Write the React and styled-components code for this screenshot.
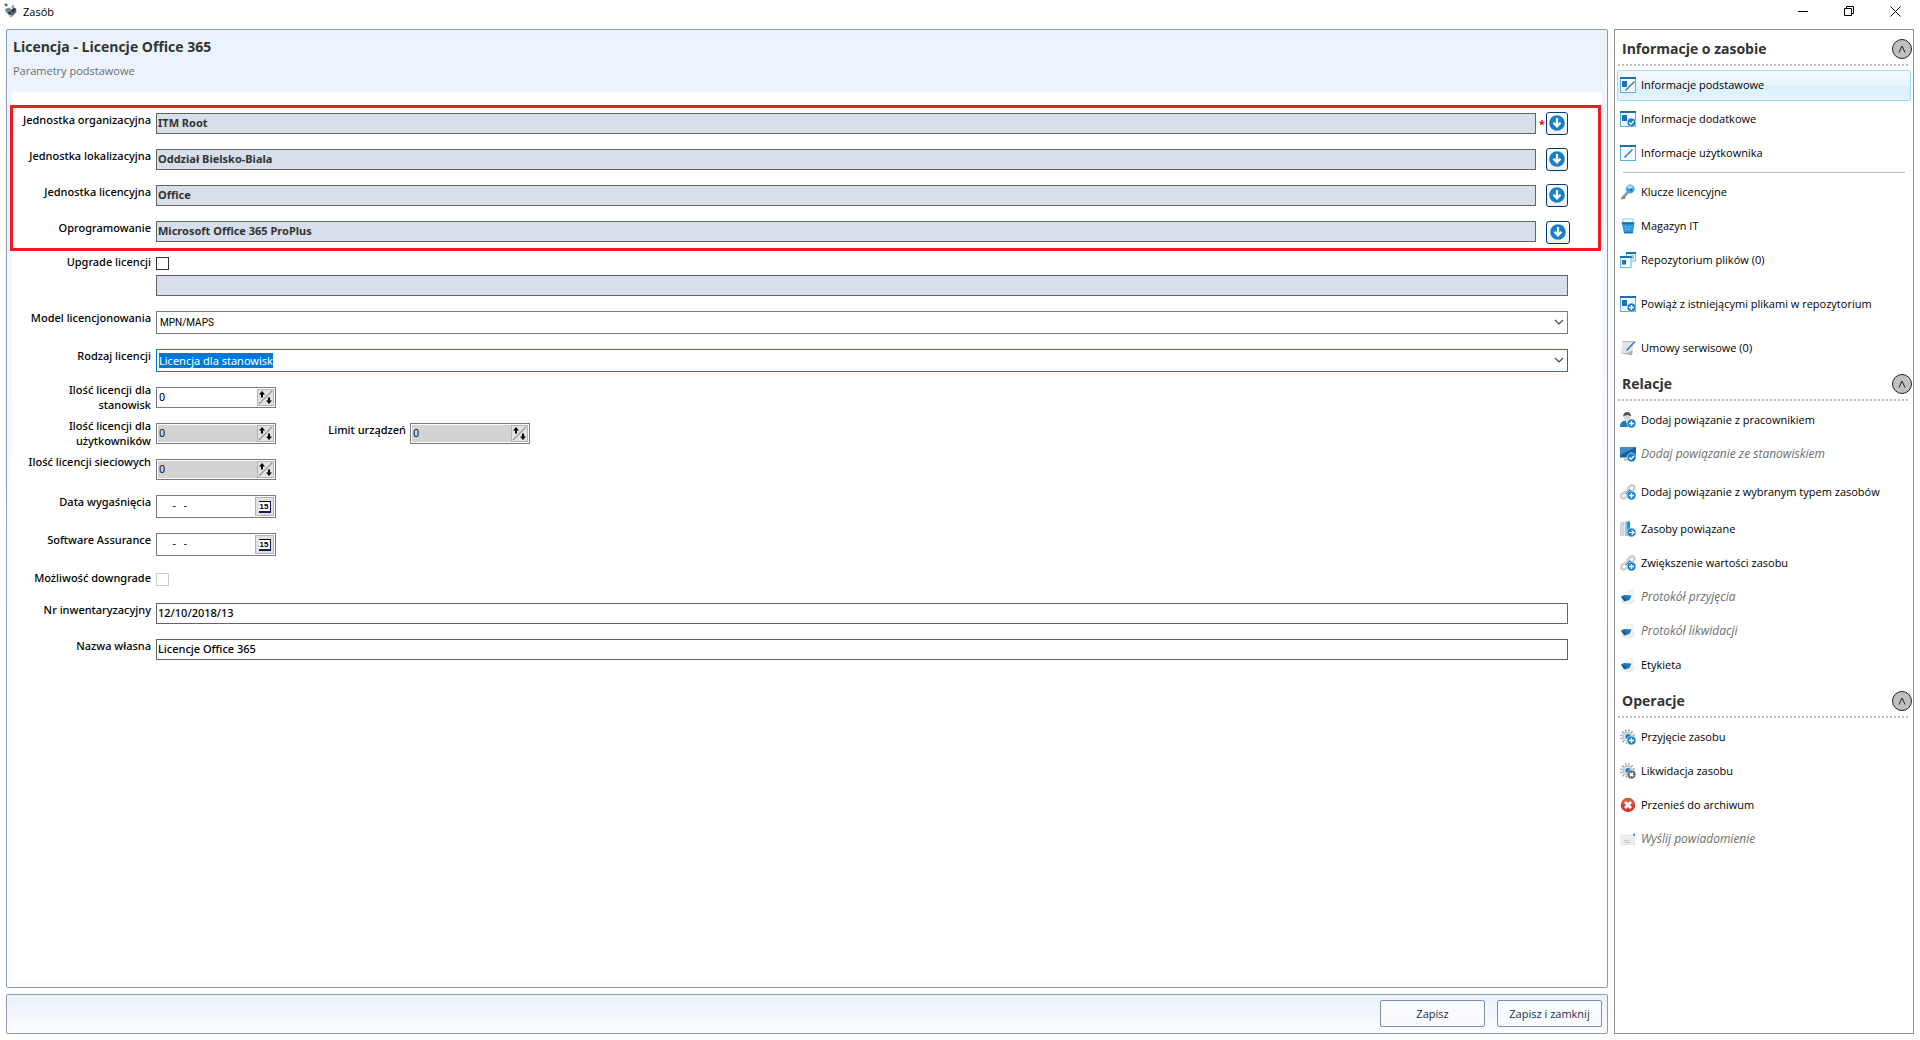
import React, { useId } from 'react';
import styled, { createGlobalStyle, css } from 'styled-components';

const GlobalStyle = createGlobalStyle`
  * {
    box-sizing: border-box;
  }

  body {
    margin: 0;
    background: #fff;
    color: #000;
    font-family: 'Open Sans', 'Noto Sans', sans-serif;
    font-size: 11px;
    line-height: 15px;
  }

  button, input, select {
    font: inherit;
    color: inherit;
  }
`;

const Window = styled.div`
  display: flex;
  flex-direction: column;
  min-height: 100vh;
`;

const TitleBar = styled.header`
  display: flex;
  align-items: center;
  height: 29px;
  padding: 0 14px 7px 3px;
`;

const WindowTitle = styled.span`
  flex: 1;
  margin-left: 4px;
`;

const WindowButtons = styled.div`
  display: flex;
  gap: 25px;
`;

const PlainButton = styled.button`
  display: flex;
  padding: 0 5px;
  border: 0;
  background: none;
`;

const Content = styled.div`
  flex: 1;
  display: grid;
  grid-template-columns: minmax(0, 1fr) 300px;
  gap: 6px;
  padding: 0 6px 6px;
`;

const MainColumn = styled.main`
  display: flex;
  flex-direction: column;
  gap: 6px;
`;

const Panel = styled.section`
  flex: 1;
  padding: 0 5px 6px;
  border: 1px solid #8d9bae;
  border-radius: 2px;
  background: linear-gradient(#eaf3fd 0, #eef3fd 62px, #f3f7fe 300px, #fcfdff 600px);
`;

const PanelHeader = styled.div`
  height: 62px;
  padding: 7px 1px 0;
`;

const PanelTitle = styled.h1`
  margin: 0;
  font-size: 14px;
  line-height: 20px;
  color: #333;
`;

const PanelSubtitle = styled.p`
  margin: 6px 0 0;
  color: #6d6d6d;
`;

const Form = styled.form`
  padding: 13px 1px 20px 0;
  background: #fff;
  min-height: calc(100% - 62px);
  font-family: 'Noto Sans', 'Open Sans', sans-serif;
`;

const RequiredGroup = styled.div`
  margin: 0 0 4px -2px;
  padding: 5px 0 6px;
  border: 3px solid #ed1c24;

  > div:last-child {
    margin-bottom: 0;
  }
`;

const Row = styled.div`
  display: grid;
  grid-template-columns: 139px minmax(0, 1fr) 28px;
  column-gap: 5px;
  align-items: start;
  height: ${(p) => p.$height || 21}px;
  margin-bottom: ${(p) => (p.$tight ? 3 : 15)}px;
`;

const LookupRow = styled(Row)`
  grid-template-columns: 138px minmax(0, 1fr) 0 52px;
`;

const Label = styled.label`
  margin-top: ${(p) => (p.$raised ? -5 : -1)}px;
  font-weight: 500;
  text-align: right;
  white-space: nowrap;
`;

const TextField = styled.input`
  width: 100%;
  height: 21px;
  padding: 0 1px 2px;
  border: 1px solid #646464;
  background: #fff;
  font-weight: 500;
  outline: 0;

  &:read-only {
    background: #d7dfea;
    color: #333;
    font-weight: 700;
  }
`;

const Star = styled.span`
  color: #f00;
  font-weight: 700;
  margin: 3px 0 0 -2px;
`;

const LookupButton = styled.button`
  display: flex;
  align-items: center;
  justify-content: center;
  width: ${(p) => (p.$wide ? 24 : 22)}px;
  height: 23px;
  margin-top: ${(p) => (p.$wide ? 0 : -1)}px;
  padding: 0 0 1px;
  border: 1px solid #003c74;
  border-radius: 3px;
  background: linear-gradient(#fff, #f0efea);
`;

const Tick = styled.input`
  appearance: none;
  width: 13px;
  height: 13px;
  margin: 2px 0 0;
  border: 1px solid #333;
  background: #fff;

  &:disabled {
    border-color: #ccc;
  }
`;

const Combo = styled.div`
  position: relative;
  display: flex;
  align-items: center;
  height: 23px;
  padding: 0 2px 1px;
  border: 1px solid ${(p) => (p.$active ? '#0078d7' : '#7a7a7a')};

  svg {
    position: absolute;
    right: 3px;
    pointer-events: none;
  }
`;

const Select = styled.select`
  appearance: none;
  width: 100%;
  height: 15px;
  padding: 0 1px;
  border: 0;
  background: none;
  font-family: Roboto, sans-serif;
  font-size: 10px;
  outline: 0;

  ${(p) =>
    p.$active &&
    css`
      field-sizing: content;
      width: auto;
      padding: 0;
      background: #0078d7;
      color: #fff;
      font-family: 'Noto Sans', sans-serif;
      font-size: 11px;
    `}
`;

const SmallFields = styled.div`
  display: flex;
  align-items: flex-start;
  gap: 4px;

  label {
    width: 126px;
  }
`;

const SmallBox = styled.div`
  display: flex;
  align-items: center;
  width: 120px;
  height: ${(p) => p.$height || 21}px;
  padding: 1px;
  border: 1px solid #7a7a7a;
  background: #fff;

  input {
    flex: 1;
    min-width: 0;
    height: 100%;
    padding: 0 1px 1px;
    border: 0;
    background: #fff;
    font-family: Roboto, sans-serif;
    outline: 0;
  }

  input:disabled {
    background: #d3d3d3;
    color: #222;
  }
`;

const StepButton = styled.button`
  display: flex;
  align-items: center;
  justify-content: center;
  width: ${(p) => (p.$calendar ? 19 : 17)}px;
  height: 100%;
  padding: 0;
  border: 1px solid #b4b4b4;
  background: #e1e1e1;
`;

const CalendarFace = styled.span`
  width: 12px;
  height: 12px;
  border: solid;
  border-width: 1px 1px 2px 0;
  border-color: #000 #1b1b5e #1b1b5e;
  background: #fff;
  color: #000;
  font: 700 8px/9px 'Liberation Sans', Arial, sans-serif;
  text-align: center;
`;

const Footer = styled.footer`
  display: flex;
  justify-content: flex-end;
  align-items: center;
  gap: 12px;
  height: 40px;
  padding: 0 5px 1px;
  border: 1px solid #8d9bae;
  border-radius: 2px;
  background: linear-gradient(#eaf1fc, #fcfdff);
`;

const ActionButton = styled.button`
  width: 105px;
  height: 27px;
  padding: 0 0 1px;
  border: 1px solid #7f90a8;
  border-radius: 2px;
  background: linear-gradient(#fbfcff, #f7f9fd);
  color: #1e2f4d;
`;

const Sidebar = styled.aside`
  border: 1px solid #919191;
  background: #fff;
`;

const SectionHeader = styled.div`
  display: flex;
  align-items: center;
  justify-content: space-between;
  height: 38px;
  padding: 0 1px 0 7px;
  background: repeating-linear-gradient(90deg, #bdbdbd 0 2px, transparent 2px 4px) 3px 34px / 290px 2px no-repeat;
`;

const SectionTitle = styled.h2`
  margin: 0;
  font-size: 14px;
  line-height: 20px;
  color: #333;
`;

const CollapseButton = styled.button`
  display: flex;
  align-items: center;
  justify-content: center;
  width: 20px;
  height: 20px;
  padding: 0;
  border: 1px solid #222;
  border-radius: 50%;
  background: #c0c0c0;
`;

const NavItem = styled.div`
  display: flex;
  align-items: center;
  height: ${(p) => p.$height || 34}px;
  padding: 1px 2px 0;
`;

const NavLink = styled.a`
  flex: 1;
  display: flex;
  align-items: center;
  gap: 5px;
  height: 31px;
  padding: 0 2px 1px;
  border: 1px solid transparent;
  border-radius: 2px;
  color: #000;
  line-height: 14px;
  text-decoration: none;
  white-space: nowrap;

  ${(p) =>
    p.$active &&
    css`
      border-color: #99defd;
      background: linear-gradient(#f3fafe, #e9f6fd 50%, #d9f0fc 51%, #e4f4fc);
    `}

  ${(p) =>
    p.$muted &&
    css`
      color: #6d6d6d;
      font-size: 12px;
      font-style: italic;
    `}
`;

const Divider = styled.hr`
  margin: 2px 8px;
  border: 0;
  border-top: 1px solid #bbb;
`;

const Svg = ({ size = 16, children }) => (
  <svg width={size} height={size} viewBox={`0 0 ${size} ${size}`} aria-hidden="true">
    {children}
  </svg>
);

const Frame = ({ children }) => (
  <>
    <rect x="0.5" y="0.5" width="15" height="15" fill="#f4fafe" stroke="#5fb0e0" />
    <path d="M0 1h16" stroke="#1f6fae" strokeWidth="2" />
    {children}
  </>
);

const Badge = ({ color = '#1b7fc4', mark = 'plus' }) => (
  <>
    <circle cx="11.5" cy="11.5" r="4.5" fill={color} stroke="#fff" strokeWidth="0.6" />
    {mark === 'plus' && <path d="M11.5 9v5M9 11.5h5" stroke="#fff" strokeWidth="1.4" />}
    {mark === 'check' && <path d="M9.3 11.5l1.7 1.7 2.9-3.3" stroke="#fff" strokeWidth="1.4" fill="none" />}
    {mark === 'cross' && <path d="M9.9 9.9l3.2 3.2M13.1 9.9l-3.2 3.2" stroke="#fff" strokeWidth="1.5" />}
    {mark === 'arrow' && <path d="M9 11.5h4.6M11.6 9.2l2.3 2.3-2.3 2.3" stroke="#fff" strokeWidth="1.2" fill="none" />}
  </>
);

const Chain = () => (
  <g fill="none" stroke="#c9cdd0" strokeWidth="2.4">
    <rect x="8.5" y="1" width="5" height="7.6" rx="2.5" transform="rotate(42 11 4.8)" />
    <rect x="2.2" y="7.4" width="5" height="7.6" rx="2.5" transform="rotate(56 4.7 11.2)" />
  </g>
);

const Gear = () => (
  <>
    <circle cx="7.5" cy="7.5" r="6.2" fill="none" stroke="#a7adb1" strokeWidth="2.4" strokeDasharray="1.6 1.64" />
    <circle cx="7.5" cy="7.5" r="4.2" fill="#e4e7e9" stroke="#c2c6c9" strokeWidth="1.4" />
    <circle cx="8" cy="7.5" r="2.6" fill="#1b7fc4" />
  </>
);

const icons = {
  basic: (
    <Frame>
      <rect x="2" y="4" width="5" height="6" fill="#1b74b8" />
      <path d="M5.5 13.5l9-9" stroke="#2d6fa3" strokeWidth="1.3" />
    </Frame>
  ),
  extra: (
    <Frame>
      <rect x="2" y="4" width="5" height="6" fill="#1b74b8" />
      <Badge mark="check" />
    </Frame>
  ),
  user: (
    <Frame>
      <path d="M4.5 12.5l8-8" stroke="#2d6fa3" strokeWidth="1.3" />
    </Frame>
  ),
  key: (
    <>
      <path d="M1.5 15l7.5-8" stroke="#929aa0" strokeWidth="2.6" />
      <path d="M3.5 14.8l1.6-1.8" stroke="#6f777c" strokeWidth="1.6" />
      <circle cx="10.2" cy="5" r="4.4" fill="#3f9fe6" />
      <ellipse cx="10" cy="3" rx="2.8" ry="1.7" fill="#b7defa" />
      <circle cx="11" cy="6" r="1.2" fill="#1467ad" />
    </>
  ),
  store: (
    <>
      <path d="M3 5V1h10v4" fill="#eef8fd" stroke="#8fcdf0" />
      <path d="M1.5 4h13l-.5 4-1 7.5H4L2.5 8z" fill="#2a95da" />
      <path d="M2 5.5h12" stroke="#1170b4" strokeWidth="1.4" />
      <path d="M4.5 9h7M5 11.5h6" stroke="#7cc6f0" strokeDasharray="2 1" />
      <path d="M4.5 14.5h8" stroke="#1170b4" />
    </>
  ),
  files: (
    <>
      <rect x="6.5" y="0.5" width="9" height="8.5" fill="#eef7fd" stroke="#6cb8e6" />
      <path d="M6 1h10" stroke="#1f6fae" strokeWidth="2" />
      <rect x="11" y="3" width="3" height="4" fill="#8fc4e6" />
      <rect x="0.5" y="4.5" width="10.5" height="11" fill="#f5fbff" stroke="#6cb8e6" />
      <path d="M0 5h11.5" stroke="#1f6fae" strokeWidth="2" />
      <rect x="2" y="8" width="4" height="4.5" fill="#1b74b8" />
    </>
  ),
  linkFiles: (
    <Frame>
      <rect x="2" y="4" width="5" height="6" fill="#1b74b8" />
      <Badge />
    </Frame>
  ),
  contract: (
    <>
      <path d="M2.5 1.5h11L12 15 0.8 13.5z" fill="#e2e3e3" />
      <path d="M1 13.5l11 1.7.8-5L7 13z" fill="#aeb0b1" />
      <path d="M2.5 1.5h11" stroke="#b9bbbc" />
      <path d="M6.5 10.5L15 1.5" stroke="#2878b8" strokeWidth="1.4" />
    </>
  ),
  employee: (
    <>
      <circle cx="7" cy="4.6" r="3.2" fill="#d9d5d0" />
      <path d="M3.2 4.5C3 1.5 5 0 7 0s4.3 1.4 3.9 4.5C9.5 2.7 5.5 2.7 3.2 4.5z" fill="#555" />
      <path d="M0 15c0-4.5 2.5-6.5 7-6.5s5 1.5 6 3.5v3z" fill="#1f79ba" />
      <path d="M5.5 8.5L7 11l1.5-2.5z" fill="#fff" />
      <Badge />
    </>
  ),
  station: (
    <>
      <rect x="0" y="1" width="16" height="10.5" fill="#1c5f9e" />
      <path d="M0 1h16L0 9z" fill="#3d8bc8" />
      <path d="M4 13.5h7" stroke="#b0b6ba" strokeWidth="2" />
      <Badge mark="check" />
    </>
  ),
  chain: (
    <>
      <Chain />
      <path d="M5 10.5l5-5.5 5 5.5z" fill="#1b7fc4" />
      <Badge />
    </>
  ),
  related: (
    <>
      <path d="M0.5 2L4 1v13l-3.5 1z" fill="#d5dade" stroke="#b5bcc1" strokeWidth="0.6" />
      <path d="M5 1l5-0.8V14l-5 1z" fill="#2592d8" />
      <path d="M5 1l2 .5V15l-2-0.5z" fill="#8bcbf0" />
      <Badge mark="arrow" />
    </>
  ),
  printer: (
    <>
      <path d="M6 6l1.5-4.5H13l.5 8L10 12z" fill="#f7f7f7" stroke="#e6e6e6" strokeWidth="0.6" />
      <path d="M1 11.5l9 .5 4.500-3-.5 4-4 2.500-8.500-1.500z" fill="#e9eaeb" />
      <path d="M1 7.5l3-1.500 7.500.5-2 4.500-5 1.500z" fill="#1a78bd" />
      <path d="M1 7.5l5 2-.5 2.500-2-.5z" fill="#155a91" />
    </>
  ),
  gearPlus: (
    <>
      <Gear />
      <Badge />
    </>
  ),
  gearCross: (
    <>
      <Gear />
      <Badge color="#676c70" mark="cross" />
    </>
  ),
  archive: (
    <>
      <circle cx="8" cy="8" r="7.2" fill="#cf3e2c" />
      <path d="M1.8 7.5a6.2 6.2 0 0 1 12.4 0z" fill="#e0705f" opacity="0.6" />
      <path d="M5 5l6 6M11 5l-6 6" stroke="#fff" strokeWidth="2.8" />
    </>
  ),
  mail: (
    <>
      <path d="M0.5 4h13l1.5 9.5H1.5z" fill="#ededed" stroke="#dcdcdc" strokeWidth="0.6" />
      <path d="M4 9.5h5M5 11.5h5" stroke="#c6c6c6" />
      <path d="M12.5 3.5l2.5-1v3z" fill="#2b86c6" />
    </>
  ),
};

const AppIcon = () => (
  <Svg size={16}>
    <path d="M1 1l2.500-.8 1.500 2-2 1.500z" fill="#5b6b75" />
    <path d="M2 6l4-1.500 3 2-2 4-4-1z" fill="#6d8a90" />
    <path d="M8 4l2.500-2.500 1 2.500-2 1.500z" fill="#93a3ac" />
    <path d="M4 10l3-1 3-3 3-1 .5 4-5 5z" fill="#55656e" />
    <path d="M8 7.500l3-3 1.500 2-2.500 3z" fill="#26333b" />
    <path d="M5 9l2-.5 1 2-1.500 1z" fill="#26333b" />
    <path d="M5 12l4 0-1.500 3z" fill="#b7c9cc" />
  </Svg>
);

const ArrowIcon = () => (
  <Svg size={16}>
    <circle cx="8" cy="8" r="7.8" fill="#1b7fc4" />
    <path d="M8 3v8M4.5 7.8L8 11.5l3.5-3.7" fill="none" stroke="#fff" strokeWidth="2.2" />
  </Svg>
);

const StepIcon = () => (
  <Svg size={15}>
    <path d="M1 14L14 1" stroke="#999" strokeWidth="1.2" />
    <path d="M4 1L1 4.5h2V7.500h2V4.5h2z" fill="#000" />
    <path d="M11 14L8 10.5h2V7.500h2v3h2z" fill="#000" />
  </Svg>
);

const Lookup = ({ label, value, required, wide }) => {
  const id = useId();
  return (
    <LookupRow>
      <Label htmlFor={id}>{label}</Label>
      <TextField id={id} value={value} readOnly />
      <Star>{required && '*'}</Star>
      <LookupButton type="button" $wide={wide} aria-label={label}>
        <ArrowIcon />
      </LookupButton>
    </LookupRow>
  );
};

const TextRow = ({ label, value }) => {
  const id = useId();
  return (
    <Row>
      <Label htmlFor={id}>{label}</Label>
      <TextField id={id} defaultValue={value} />
    </Row>
  );
};

const TickRow = ({ label, disabled, ...rest }) => {
  const id = useId();
  return (
    <Row $height={17} {...rest}>
      <Label htmlFor={id}>{label}</Label>
      <Tick id={id} type="checkbox" disabled={disabled} />
    </Row>
  );
};

const ComboRow = ({ label, value, active }) => {
  const id = useId();
  return (
    <Row $height={23}>
      <Label htmlFor={id}>{label}</Label>
      <Combo $active={active}>
        <Select id={id} $active={active}>
          <option>{value}</option>
        </Select>
        <Svg size={10}>
          <path d="M1 3l4 4 4-4" fill="none" stroke="#444" strokeWidth="1.2" />
        </Svg>
      </Combo>
    </Row>
  );
};

const Spinner = ({ id, disabled }) => (
  <SmallBox>
    <input id={id} defaultValue="0" disabled={disabled} />
    <StepButton type="button" aria-label="+/-">
      <StepIcon />
    </StepButton>
  </SmallBox>
);

const SpinnerRow = ({ label, disabled, extraLabel }) => {
  const id = useId();
  return (
    <Row>
      <Label htmlFor={id} $raised>{label}</Label>
      <SmallFields>
        <Spinner id={id} disabled={disabled} />
        {extraLabel && (
          <>
            <Label htmlFor={`${id}-extra`}>{extraLabel}</Label>
            <Spinner id={`${id}-extra`} disabled={disabled} />
          </>
        )}
      </SmallFields>
    </Row>
  );
};

const DateRow = ({ label }) => {
  const id = useId();
  return (
    <Row $height={23}>
      <Label htmlFor={id}>{label}</Label>
      <SmallBox $height={23}>
        <input id={id} defaultValue="     -   -" />
        <StepButton type="button" $calendar>
          <CalendarFace>15</CalendarFace>
        </StepButton>
      </SmallBox>
    </Row>
  );
};

const sections = [
  {
    title: 'Informacje o zasobie',
    items: [
      { icon: 'basic', text: 'Informacje podstawowe', active: true },
      { icon: 'extra', text: 'Informacje dodatkowe' },
      { icon: 'user', text: 'Informacje użytkownika', divider: true },
      { icon: 'key', text: 'Klucze licencyjne' },
      { icon: 'store', text: 'Magazyn IT' },
      { icon: 'files', text: 'Repozytorium plików (0)' },
      { icon: 'linkFiles', text: 'Powiąż z istniejącymi plikami w repozytorium', height: 54 },
      { icon: 'contract', text: 'Umowy serwisowe (0)' },
    ],
  },
  {
    title: 'Relacje',
    items: [
      { icon: 'employee', text: 'Dodaj powiązanie z pracownikiem' },
      { icon: 'station', text: 'Dodaj powiązanie ze stanowiskiem', muted: true },
      { icon: 'chain', text: 'Dodaj powiązanie z wybranym typem zasobów', height: 41 },
      { icon: 'related', text: 'Zasoby powiązane' },
      { icon: 'chain', text: 'Zwiększenie wartości zasobu' },
      { icon: 'printer', text: 'Protokół przyjęcia', muted: true },
      { icon: 'printer', text: 'Protokół likwidacji', muted: true },
      { icon: 'printer', text: 'Etykieta' },
    ],
  },
  {
    title: 'Operacje',
    items: [
      { icon: 'gearPlus', text: 'Przyjęcie zasobu' },
      { icon: 'gearCross', text: 'Likwidacja zasobu' },
      { icon: 'archive', text: 'Przenieś do archiwum' },
      { icon: 'mail', text: 'Wyślij powiadomienie', muted: true },
    ],
  },
];

const App = () => (
  <Window>
    <GlobalStyle />
    <TitleBar>
      <AppIcon />
      <WindowTitle>Zasób</WindowTitle>
      <WindowButtons>
        <PlainButton aria-label="Minimalizuj">
          <Svg size={11}>
            <path d="M0 5.5h10" stroke="#000" />
          </Svg>
        </PlainButton>
        <PlainButton aria-label="Przywróć">
          <Svg size={11}>
            <path d="M0.5 2.5h7v7h-7zM2.5 2.5v-2h7v7h-2" fill="none" stroke="#000" />
          </Svg>
        </PlainButton>
        <PlainButton aria-label="Zamknij">
          <Svg size={11}>
            <path d="M0.5 0.5l10 10M10.5 0.5l-10 10" stroke="#000" />
          </Svg>
        </PlainButton>
      </WindowButtons>
    </TitleBar>
    <Content>
      <MainColumn>
        <Panel>
          <PanelHeader>
            <PanelTitle>Licencja - Licencje Office 365</PanelTitle>
            <PanelSubtitle>Parametry podstawowe</PanelSubtitle>
          </PanelHeader>
          <Form>
            <RequiredGroup>
              <Lookup label="Jednostka organizacyjna" value="ITM Root" required />
              <Lookup label="Jednostka lokalizacyjna" value="Oddział Bielsko-Biala" />
              <Lookup label="Jednostka licencyjna" value="Office" />
              <Lookup label="Oprogramowanie" value="Microsoft Office 365 ProPlus" wide />
            </RequiredGroup>
            <TickRow label="Upgrade licencji" $tight />
            <Row>
              <span />
              <TextField readOnly aria-label="Upgrade licencji" />
            </Row>
            <ComboRow label="Model licencjonowania" value="MPN/MAPS" />
            <ComboRow label="Rodzaj licencji" value="Licencja dla stanowisk" active />
            <SpinnerRow label={<>Ilość licencji dla<br />stanowisk</>} />
            <SpinnerRow label={<>Ilość licencji dla<br />użytkowników</>} disabled extraLabel="Limit urządzeń" />
            <SpinnerRow label="Ilość licencji sieciowych" disabled />
            <DateRow label="Data wygaśnięcia" />
            <DateRow label="Software Assurance" />
            <TickRow label="Możliwość downgrade" disabled />
            <TextRow label="Nr inwentaryzacyjny" value="12/10/2018/13" />
            <TextRow label="Nazwa własna" value="Licencje Office 365" />
          </Form>
        </Panel>
        <Footer>
          <ActionButton>Zapisz</ActionButton>
          <ActionButton>Zapisz i zamknij</ActionButton>
        </Footer>
      </MainColumn>
      <Sidebar>
        {sections.map((section) => (
          <section key={section.title}>
            <SectionHeader>
              <SectionTitle>{section.title}</SectionTitle>
              <CollapseButton aria-label="Zwiń">
                <Svg size={8}>
                  <path d="M1 7.5l3-6.5 3 6.5" fill="none" stroke="#222" />
                </Svg>
              </CollapseButton>
            </SectionHeader>
            {section.items.map((item) => (
              <React.Fragment key={item.text}>
                <NavItem $height={item.height}>
                  <NavLink href="#" $active={item.active} $muted={item.muted}>
                    <Svg>{icons[item.icon]}</Svg>
                    {item.text}
                  </NavLink>
                </NavItem>
                {item.divider && <Divider />}
              </React.Fragment>
            ))}
          </section>
        ))}
      </Sidebar>
    </Content>
  </Window>
);

export default App;
